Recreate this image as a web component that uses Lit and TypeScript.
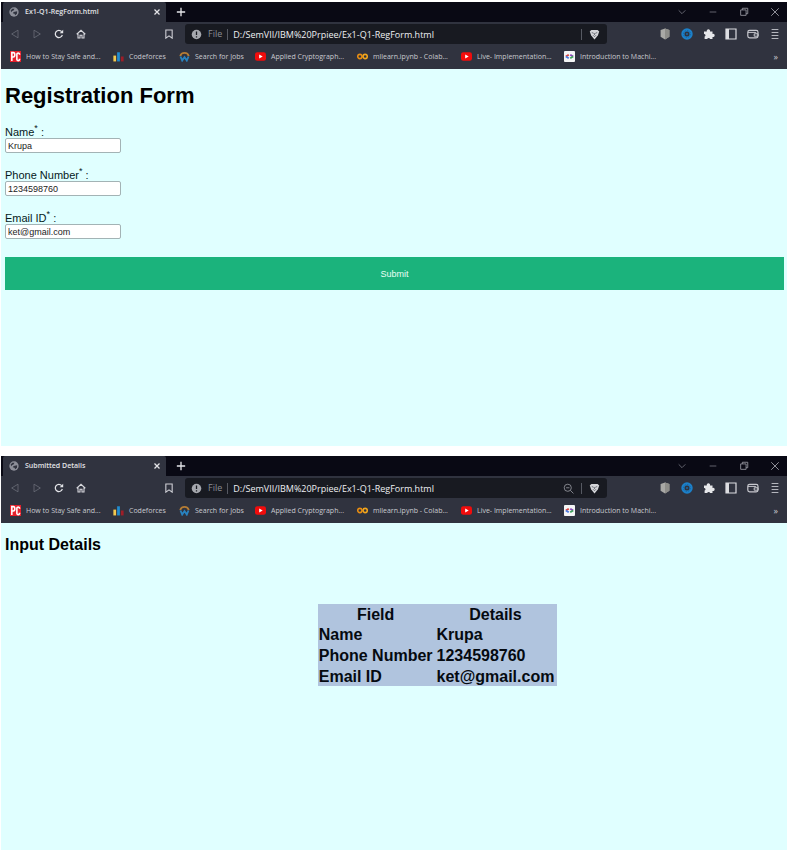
import { LitElement, html, css, svg, nothing } from "lit";
import { customElement, property } from "lit/decorators.js";

const icon = (body: unknown, box = 12) =>
  html`<svg viewBox="0 0 ${box} ${box}" fill="none" stroke="currentColor" aria-hidden="true">${body}</svg>`;

const icons = {
  globe: icon(svg`<circle cx="6" cy="6" r="5.6" fill="#8d8f99" stroke="none"/><path d="M2 4.2 4 2.2 6.6 2 5.4 4.2 3.8 4.8 2.6 6.4ZM5.6 6 9.8 5.2 9.6 8 7.4 9.8 6.6 8.2 4.6 7.6Z" fill="#30333f" stroke="none"/>`),
  close: icon(svg`<path d="m3 3 6 6M9 3 3 9" stroke="#e4e5e9" stroke-width="1.5"/>`),
  plus: icon(svg`<path d="M6 1v10M1 6h10" stroke="#e4e5e9" stroke-width="1.6"/>`),
  chevron: icon(svg`<path d="m2 4 4 4 4-4" stroke="#74757f"/>`),
  minimize: icon(svg`<path d="M2 6h8" stroke="#74757f"/>`),
  restore: icon(svg`<path d="M2 3.5h6.5V10H2ZM4 3.5v-2h6.5V8h-2" stroke="#9c9da6"/>`),
  exit: icon(svg`<path d="m1.5 1.5 9 9m0-9-9 9" stroke="#a9aab2"/>`),
  back: icon(svg`<path d="M9.6 1.4v9.2L2 6Z" stroke="#686b76"/>`),
  forward: icon(svg`<path d="M2.4 1.4v9.2L10 6Z" stroke="#686b76"/>`),
  reload: icon(svg`<path d="M10 7.2A4.3 4.3 0 1 1 9.2 3.2" stroke="#e4e5e9" stroke-width="1.5"/><path d="M11 .8v4.4H6.8Z" fill="#e4e5e9" stroke="none"/>`),
  home: icon(svg`<path d="M.8 6.3 6 1.5l5.2 4.8M2.4 5.5v5.2h2.4V7.4h2.4v3.3h2.4V5.5" stroke="#d6d7dc" stroke-width="1.3"/>`),
  bookmark: icon(svg`<path d="M2.2 1.2h7.6v9.8L6 8.2 2.2 11Z" stroke="#cfd0d6" stroke-width="1.3"/>`),
  info: icon(svg`<circle cx="6" cy="6" r="5.2" fill="#a6a8ae" stroke="none"/><path d="M6 2.6v4M6 7.8v1.5" stroke="#191b22" stroke-width="1.4"/>`),
  zoom: icon(svg`<circle cx="5.2" cy="5.2" r="3.9" stroke="#8b8d95"/><path d="m8 8 3.4 3.4M3.4 5.2H7" stroke="#8b8d95"/>`),
  lion: icon(svg`<path d="M2.6 1h6.8l1.8 1.6L9.6 7 6 11.4 2.4 7 .8 2.6Z" fill="#d4d5d9" stroke="none"/><path d="m3 3.8 2.2 1M9 3.8l-2.2 1M4.4 6.8 6 8.4l1.6-1.6M6 4.6v2" stroke="#5b5d66" stroke-width=".9"/>`),
  shield: icon(svg`<path d="M6 .4 10.4 2v6.8L6 11.6 1.6 8.8V2Z" fill="#a9a9a6" stroke="none"/><path d="M6 .4 10.4 2v6.8L6 11.6Z" fill="#8e8e8a" stroke="none"/>`),
  ring: icon(svg`<circle cx="6" cy="6" r="4.1" stroke="#1c80c9" stroke-width="3.2"/><circle cx="6" cy="6" r="3.4" stroke="#17598e" stroke-width=".7" stroke-dasharray="1.6 1"/><circle cx="6" cy="6" r="1" fill="#1d6aa5" stroke="none"/>`),
  puzzle: icon(svg`<path d="M1 3.6h2.8a1.7 1.7 0 1 1 3.2 0h2.5v2.3a1.6 1.6 0 1 1 0 3V11H7.1a1.5 1.5 0 0 0-2.9 0H1.6V8.6a1.4 1.4 0 0 0-.6-2.7Z" fill="#e6e7ea" stroke="none"/>`),
  sidebar: icon(svg`<path d="M1 1h10v10H1Z" stroke="#dcdde1" stroke-width="1.2"/><path d="M1 1h3v10H1Z" fill="#dcdde1" stroke="none"/>`),
  wallet: icon(svg`<rect x=".8" y="2.4" width="10.2" height="7.4" rx="1.8" stroke="#c7c8ce" stroke-width="1.2"/><path d="M1 4.4h7.2q1 0 1 1M7.2 5.8H11v2.4H7.2Z" stroke="#c7c8ce"/>`),
  menu: icon(svg`<path d="M2.6 1.5h6.8M2.6 4.5h6.8M2.6 7.5h6.8M2.6 10.5h6.8" stroke="#b4b6bd"/>`),
};

const video = icon(svg`<rect x="0" y="1.4" width="12" height="9.2" rx="2.4" fill="#f10c0c" stroke="none"/><path d="M4.6 3.8v4.4L8.4 6Z" fill="#fff" stroke="none"/>`);

const bookmarks = [
  {
    label: "How to Stay Safe and...",
    mark: icon(svg`<path d="M0 0h12v12H0Z" fill="#e5202b" stroke="none"/><path d="M2 11V1.8h1.6a1.5 2.2 0 0 1 0 4.8H2M10.4 4V3.2a1.5 1.5 0 0 0-2.9 0v6.2a1.5 1.5 0 0 0 2.9 0V8.4" stroke="#fff" stroke-width="1.7"/>`),
  },
  {
    label: "Codeforces",
    mark: icon(svg`<path d="M.4 5h3v6.4h-3Z" fill="#f3c94f" stroke="none"/><path d="M4.5 1.4h3v10h-3Z" fill="#1f8dd0" stroke="none"/><path d="M8.6 6h3v5.4h-3Z" fill="#9e1e28" stroke="none"/>`),
  },
  {
    label: "Search for Jobs",
    mark: icon(svg`<path d="M1.4 5.6a4.7 4.4 0 0 1 9.2 0" stroke="#b47c35" stroke-width="2"/><path d="m1.6 6 1.9 4.4L6 6.6l2.5 3.8L10.4 6" stroke="#2883c0" stroke-width="2"/>`),
  },
  { label: "Applied Cryptograph...", mark: video },
  {
    label: "mllearn.ipynb - Colab...",
    mark: icon(svg`<circle cx="3.1" cy="6" r="2.3" stroke="#e88d12" stroke-width="1.7"/><circle cx="8.9" cy="6" r="2.3" stroke="#f2a61c" stroke-width="1.7"/>`),
  },
  { label: "Live- Implementation...", mark: video },
  {
    label: "Introduction to Machi...",
    mark: icon(svg`<rect width="12" height="12" rx="1" fill="#f4f5f5" stroke="none"/><path d="M5.2 4 2 6" stroke="#d9403a" stroke-width="2"/><path d="M2 6l3.2 2" stroke="#4a7be0" stroke-width="2"/><path d="M6.8 4 10 6" stroke="#8a49b8" stroke-width="2"/><path d="M10 6 6.8 8" stroke="#3fa45b" stroke-width="2"/>`),
  },
];

@customElement("browser-window")
export class BrowserWindow extends LitElement {
  @property() heading = "";
  @property() address = "";
  @property({ type: Boolean }) zoomed = false;

  static styles = css`
    :host {
      display: flex;
      flex-direction: column;
      min-width: 0;
      background: #e0ffff;
    }
    * {
      box-sizing: border-box;
    }
    header {
      font-family: "Open Sans", "Noto Sans", sans-serif;
      color: #c9cad0;
    }
    svg {
      display: block;
      width: 100%;
      height: 100%;
    }
    button {
      flex: none;
      width: 12px;
      height: 12px;
      padding: 0;
      border: 0;
      background: none;
      color: inherit;
      font: inherit;
    }
    .tabs {
      display: flex;
      align-items: center;
      height: 20px;
      padding: 0 7px 0 2px;
      background: #090914;
    }
    .tab {
      display: flex;
      align-items: center;
      width: 163px;
      height: 20px;
      padding: 0 4px 0 6px;
      background: #30333f;
      border-radius: 2px 2px 0 0;
    }
    .favicon {
      width: 10px;
      height: 10px;
    }
    .title {
      flex: 1;
      padding-left: 6px;
      font-size: 7px;
      font-weight: 600;
      line-height: 12px;
      color: #e2e3e7;
      white-space: nowrap;
    }
    .tab button,
    .controls button {
      width: 10px;
      height: 10px;
    }
    .add {
      width: 10px;
      height: 10px;
      margin-left: 10px;
    }
    .controls {
      display: flex;
      gap: 21px;
      margin-left: auto;
    }
    .toolbar {
      display: flex;
      align-items: center;
      height: 24px;
      background: #30333f;
    }
    .nav {
      display: flex;
      align-items: center;
      gap: 12px;
      width: 184px;
      padding: 0 11px 0 9px;
    }
    .nav button {
      width: 10px;
      height: 10px;
    }
    .nav button:last-child {
      margin-left: auto;
    }
    .address {
      display: flex;
      align-items: center;
      flex: 1;
      min-width: 0;
      height: 20px;
      padding: 0 7px 0 6px;
      border-radius: 3px;
      background: #181a21;
      font-size: 9px;
      line-height: 12px;
    }
    .address button {
      width: 11px;
      height: 11px;
    }
    .scheme {
      padding: 0 5px 0 6px;
      color: #8b8d95;
    }
    .rule {
      width: 1px;
      height: 11px;
      background: #565962;
    }
    .address input {
      flex: 1;
      min-width: 0;
      height: 16px;
      padding: 0 5px;
      border: 0;
      outline: 0;
      background: none;
      color: #eeeff2;
      font: inherit;
      font-weight: 500;
    }
    .address .rule ~ .rule {
      margin: 0 7px;
    }
    .tools {
      display: flex;
      gap: 10px;
      width: 180px;
      padding-right: 6px;
      justify-content: flex-end;
    }
    .bookmarks {
      display: grid;
      grid-template-columns: 103px 66px 76px 102px 104px 103px 1fr auto;
      align-items: center;
      height: 23px;
      padding: 0 9px 2px 9px;
      background: #30333f;
    }
    .bookmarks a {
      display: flex;
      align-items: center;
      gap: 5px;
      color: inherit;
      text-decoration: none;
      font-size: 7px;
      line-height: 12px;
      white-space: nowrap;
    }
    .mark {
      width: 11px;
      height: 11px;
    }
    .bookmarks button {
      width: auto;
      font-size: 9px;
      line-height: 10px;
    }
    .page {
      flex: 1;
      display: flow-root;
    }
  `;

  render() {
    return html`
      <header>
        <div class="tabs">
          <div class="tab">
            <span class="favicon">${icons.globe}</span>
            <span class="title">${this.heading}</span>
            <button aria-label="Close tab">${icons.close}</button>
          </div>
          <button class="add" aria-label="New tab">${icons.plus}</button>
          <div class="controls">
            <button aria-label="Search tabs">${icons.chevron}</button>
            <button aria-label="Minimize">${icons.minimize}</button>
            <button aria-label="Restore">${icons.restore}</button>
            <button aria-label="Close window">${icons.exit}</button>
          </div>
        </div>
        <div class="toolbar">
          <div class="nav">
            <button aria-label="Back">${icons.back}</button>
            <button aria-label="Forward">${icons.forward}</button>
            <button aria-label="Reload">${icons.reload}</button>
            <button aria-label="Home">${icons.home}</button>
            <button aria-label="Bookmark this page">${icons.bookmark}</button>
          </div>
          <div class="address">
            <button aria-label="Page information">${icons.info}</button>
            <span class="scheme">File</span>
            <span class="rule"></span>
            <input aria-label="Address" .value=${this.address} />
            ${this.zoomed ? html`<button aria-label="Zoom">${icons.zoom}</button>` : nothing}
            <span class="rule"></span>
            <button aria-label="Shields">${icons.lion}</button>
          </div>
          <div class="tools">
            <button aria-label="Adblock extension">${icons.shield}</button>
            <button aria-label="Ring extension">${icons.ring}</button>
            <button aria-label="Extensions">${icons.puzzle}</button>
            <button aria-label="Sidebar">${icons.sidebar}</button>
            <button aria-label="Wallet">${icons.wallet}</button>
            <button aria-label="Menu">${icons.menu}</button>
          </div>
        </div>
        <nav class="bookmarks">
          ${bookmarks.map((b) => html`<a href="#"><span class="mark">${b.mark}</span>${b.label}</a>`)}
          <button aria-label="More bookmarks">»</button>
        </nav>
      </header>
      <main class="page"><slot></slot></main>
    `;
  }
}

@customElement("app-root")
export class AppRoot extends LitElement {
  static styles = css`
    :host {
      display: grid;
      grid-template-rows: 444fr 394fr;
      gap: 10px;
      box-sizing: border-box;
      min-height: 100vh;
      padding: 2px 0 0 1px;
      background: #fff;
      font-family: "Liberation Sans", Arial, sans-serif;
      color: #06191b;
    }
    * {
      box-sizing: border-box;
    }
    form {
      padding: 14px 3px 0 4px;
    }
    h1 {
      margin: 0 0 17px;
      font-size: 22px;
      line-height: 26px;
      color: #000;
    }
    .field {
      display: flex;
      flex-direction: column;
      align-items: flex-start;
      height: 43px;
    }
    label {
      font-size: 11px;
      line-height: 12px;
    }
    sup {
      font-size: 9px;
      line-height: 0;
    }
    .field input {
      width: 116px;
      height: 15px;
      padding: 0 2px;
      border: 1px solid #a3b3b5;
      border-radius: 2px;
      background: #fff;
      color: #222;
      font: 9px "Liberation Sans", Arial, sans-serif;
    }
    .submit {
      display: block;
      width: 100%;
      height: 33px;
      margin-top: 2px;
      padding: 0;
      border: 0;
      background: #1bb37c;
      color: #e9fff6;
      font: 9px "Liberation Sans", Arial, sans-serif;
    }
    .details {
      padding: 12px 4px 0;
    }
    h2 {
      margin: 0;
      font-size: 16px;
      line-height: 20px;
      color: #000;
    }
    table {
      margin: 49px 29% 0 auto;
      height: 82px;
      border-collapse: collapse;
      background: #b0c4de;
      font-size: 16px;
      font-weight: 700;
      line-height: 18px;
      white-space: nowrap;
      color: #050a10;
    }
    th,
    td {
      padding: 2px 3px 0 1px;
    }
  `;

  private fields = [
    { id: "name", label: "Name", type: "text", value: "Krupa" },
    { id: "phone", label: "Phone Number", type: "tel", value: "1234598760" },
    { id: "email", label: "Email ID", type: "email", value: "ket@gmail.com" },
  ];

  private address = "D:/SemVII/IBM%20Prpiee/Ex1-Q1-RegForm.html";

  render() {
    return html`
      <browser-window heading="Ex1-Q1-RegForm.html" address=${this.address}>
        <form @submit=${(e: Event) => e.preventDefault()}>
          <h1>Registration Form</h1>
          ${this.fields.map(
            (f) => html`<div class="field">
              <label for=${f.id}>${f.label}<sup>*</sup> :</label>
              <input id=${f.id} type=${f.type} .value=${f.value} required />
            </div>`
          )}
          <button class="submit">Submit</button>
        </form>
      </browser-window>
      <browser-window heading="Submitted Details" address=${this.address} zoomed>
        <div class="details">
          <h2>Input Details</h2>
          <table>
            <thead>
              <tr><th>Field</th><th>Details</th></tr>
            </thead>
            <tbody>
              ${this.fields.map((f) => html`<tr><td>${f.label}</td><td>${f.value}</td></tr>`)}
            </tbody>
          </table>
        </div>
      </browser-window>
    `;
  }
}
